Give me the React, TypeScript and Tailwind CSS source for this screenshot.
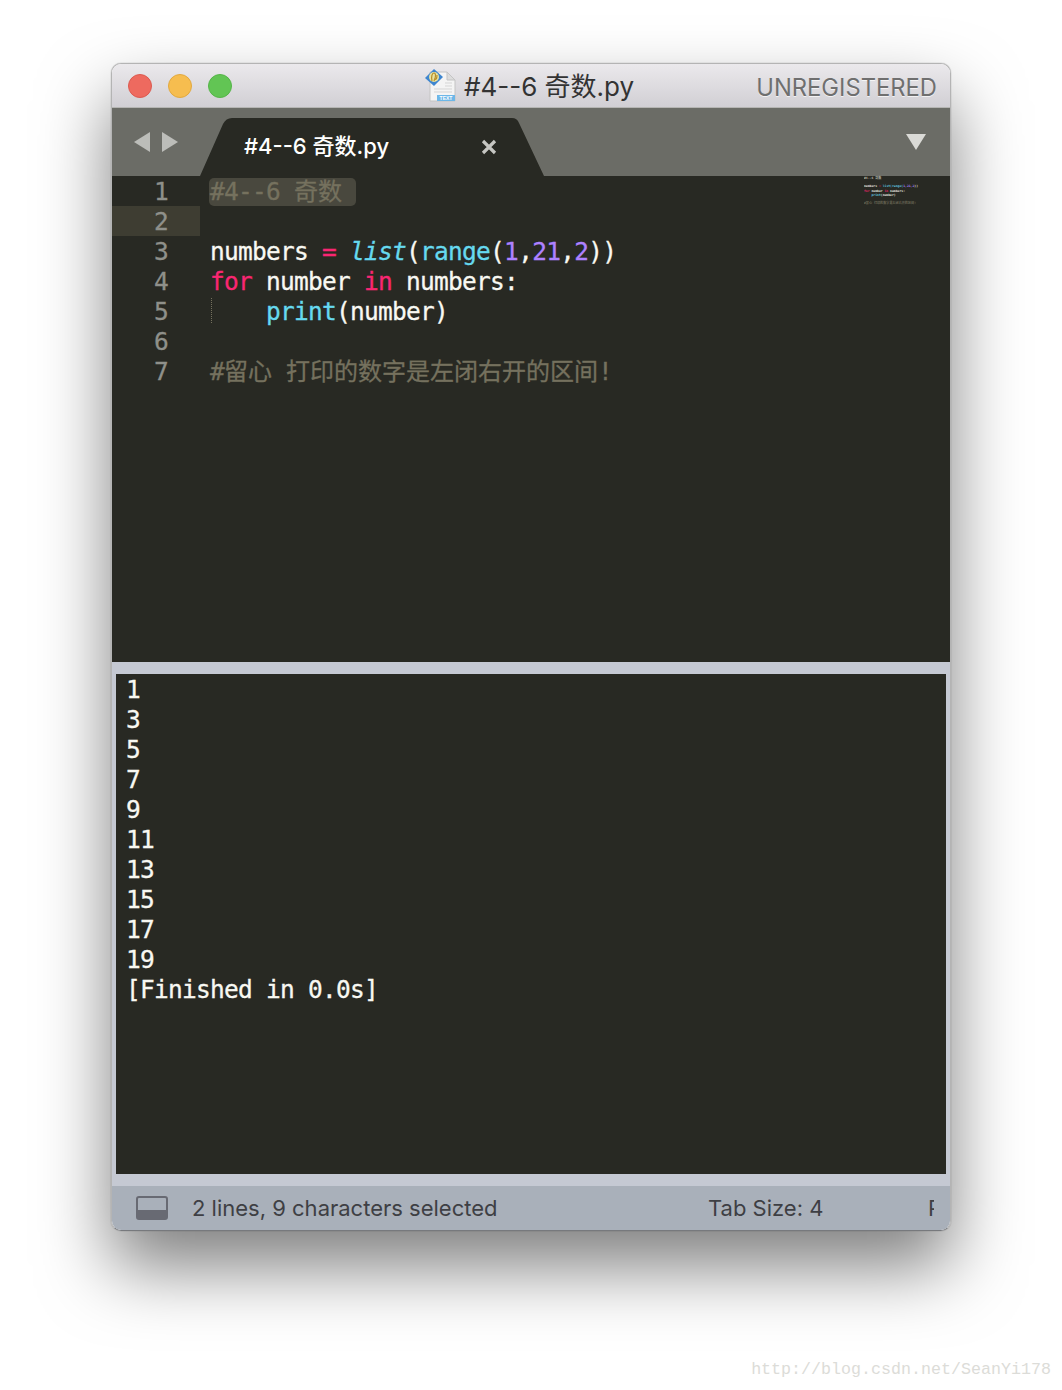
const mono = "font-['DejaVu_Sans_Mono','Noto_Sans_CJK_SC',monospace]";
const ui = "font-['Inter','Noto_Sans_CJK_SC',sans-serif]";
const codeText = 'text-[24.5px] tracking-[-0.75px] [-webkit-text-stroke:0.3px]';

const outputLines = ['1', '3', '5', '7', '9', '11', '13', '15', '17', '19', '[Finished in 0.0s]'];

function Cjk({ children }: { children: string }) {
  return <span className="text-[24px] tracking-normal leading-[24px] font-['Noto_Sans_CJK_SC',sans-serif]">{children}</span>;
}

function FileIcon() {
  return (
    <svg width="34" height="34" viewBox="0 0 34 34" className="shrink-0">
      <path d="M6 3h17l8 8v21H6z" fill="#f4f4f4" stroke="#c4c4c4" />
      <path d="M23 3v8h8z" fill="#dcdcdc" stroke="#c4c4c4" />
      <path d="M13 26h18v6H13z" fill="#6db7e8" />
      <path d="M10 0l9 8-9 9-9-8z" fill="#3f86cf" />
      <circle cx="10" cy="8" r="5" fill="#e8e2a0" />
      <path d="M8 12c-1-4 0-8 2-8s2 4 0 8m0-2c2 1 3 0 3-4" fill="none" stroke="#b98f2a" strokeWidth="1.2" />
      <path d="M21 14h7M21 17h7M10 20h18M10 23h18" stroke="#d5d5d5" strokeWidth="1" />
      <text x="22" y="31" textAnchor="middle" fontSize="5" fontWeight="700" fill="#fff" fontFamily="Liberation Sans">TEXT</text>
    </svg>
  );
}

function Minimap() {
  return (
    <div className={`absolute left-[752px] top-0 text-[3.1px] leading-[4.2px] tracking-normal [-webkit-text-stroke:0px] font-bold whitespace-pre opacity-90 ${mono}`}>
      <div className="text-[#c4c4b8]">#4--6 奇数</div>
      <div className="h-[4.2px]" />
      <div className="text-[#f8f8f2]">
        numbers <span className="text-[#f92672]">=</span> <span className="text-[#66d9ef]">list(range(</span>
        <span className="text-[#ae81ff]">1,21,2</span>))
      </div>
      <div className="text-[#f8f8f2]">
        <span className="text-[#f92672]">for</span> number <span className="text-[#f92672]">in</span> numbers:
      </div>
      <div className="text-[#f8f8f2]">
        {'    '}
        <span className="text-[#66d9ef]">print</span>(number)
      </div>
      <div className="h-[4.2px]" />
      <div className="text-[#75715e]">#留心 打印的数字是左闭右开的区间!</div>
    </div>
  );
}

export default function App() {
  return (
    <div className="w-[1062px] h-[1390px] bg-white pl-[111px] pt-[63px] flex flex-col overflow-hidden">
      <div className="w-[840px] h-[1168px] flex flex-col rounded-[10px] overflow-hidden shadow-[0_36px_70px_rgba(0,0,0,0.5),0_0_1px_rgba(0,0,0,0.5)] border border-[#b4b4b4] border-b-[#77797d]">
        {/* Title bar */}
        <div className={`h-[44px] shrink-0 flex items-center pl-[16px] pr-[13px] bg-gradient-to-b from-[#ebe9ec] to-[#d1cfd4] border-b border-[#b5b5b3] ${ui}`}>
          <div className="flex gap-[16px] w-[296px]">
            <span className="w-[24px] h-[24px] rounded-full bg-[#ee6a5f] border border-[#dc5a50]" />
            <span className="w-[24px] h-[24px] rounded-full bg-[#f6bd4f] border border-[#e2a93f]" />
            <span className="w-[24px] h-[24px] rounded-full bg-[#62c554] border border-[#55b548]" />
          </div>
          <FileIcon />
          <span className="ml-[6px] mt-[2px] text-[26px] text-[#333] whitespace-nowrap">#4--6 奇数.py</span>
          <span className="ml-auto mt-[5px] text-[23.75px] text-[#6f6f6f] whitespace-nowrap [text-shadow:0_1px_0_rgba(255,255,255,0.7)]">UNREGISTERED</span>
        </div>

        {/* Tab bar */}
        <div className={`h-[68px] shrink-0 bg-[#6b6c66] flex items-end ${ui}`}>
          <div className="w-[88px] h-full flex items-start gap-[12px] pl-[22px] pt-[24px]">
            <svg width="16" height="20" viewBox="0 0 16 20"><path d="M16 0v20L0 10z" fill="#bcbdb9" /></svg>
            <svg width="16" height="20" viewBox="0 0 16 20"><path d="M0 0v20l16-10z" fill="#bcbdb9" /></svg>
          </div>
          <div className="relative w-[344px] h-[58px]">
            <svg width="344" height="58" viewBox="0 0 344 58" className="absolute inset-0">
              <path d="M0 58L23 6Q26 0 32 0H312Q317 0 319 5L344 58z" fill="#282923" />
            </svg>
            <div className="relative h-full flex items-center pl-[44px] pb-[2px]">
              <span className="w-[236px] text-[22px] font-medium text-white whitespace-nowrap">#4--6 奇数.py</span>
              <svg width="16" height="16" viewBox="0 0 16 16" className="mt-[2px] ml-px">
                <path d="M2 2l12 12M14 2L2 14" stroke="#c6c6c2" strokeWidth="3.2" />
              </svg>
            </div>
          </div>
          <svg width="20" height="16" viewBox="0 0 20 16" className="self-start mt-[26px] ml-auto mr-[24px]">
            <path d="M0 0h20L10 16z" fill="#dadad6" />
          </svg>
        </div>

        {/* Editor */}
        <div className={`relative h-[486px] shrink-0 flex bg-[#282923] leading-[32px] ${codeText} ${mono}`}>
          <div className="w-[88px] shrink-0 text-right text-[#8f908a]">
            {[1, 2, 3, 4, 5, 6, 7].map((n) => (
              <div key={n} className={`h-[30px] pr-[32px] ${n === 2 ? 'bg-[#3e3d32]' : ''}`}>
                {n}
              </div>
            ))}
          </div>
          <div className="pl-[10px] text-[#f8f8f2] whitespace-pre">
            <div className="h-[30px] flex items-start">
              <span className="-ml-px pl-px h-[28px] mt-[2px] leading-[26px] rounded-[5px] bg-[#49483e] text-[#75715e]">
                #4--6<span className="opacity-40"> </span>
                <Cjk>奇数</Cjk>
                <span className="inline-block w-[14px]" />
              </span>
            </div>
            <div className="h-[30px]" />
            <div className="h-[30px]">
              numbers <span className="text-[#f92672]">=</span> <span className="italic text-[#66d9ef]">list</span>(
              <span className="text-[#66d9ef]">range</span>(<span className="text-[#ae81ff]">1</span>,
              <span className="text-[#ae81ff]">21</span>,<span className="text-[#ae81ff]">2</span>))
            </div>
            <div className="h-[30px]">
              <span className="text-[#f92672]">for</span> number <span className="text-[#f92672]">in</span> numbers:
            </div>
            <div className="relative h-[30px]">
              <span className="absolute left-px top-[2px] h-[25px] border-l border-dotted border-[#75715e]" />
              {'    '}
              <span className="text-[#66d9ef]">print</span>(number)
            </div>
            <div className="h-[30px]" />
            <div className="h-[30px] text-[#75715e]">
              #<Cjk>留心</Cjk> <Cjk>打印的数字是左闭右开的区间</Cjk>!
            </div>
          </div>
          <Minimap />
        </div>

        {/* Output panel */}
        <div className="flex-1 min-h-0 bg-[#c5c9d3] px-[4px] py-[12px]">
          <div className={`h-[500px] bg-[#282923] pl-[10px] pt-px leading-[30px] text-[#f8f8f2] ${codeText} ${mono}`}>
            {outputLines.map((line, i) => (
              <div key={i}>{line}</div>
            ))}
          </div>
        </div>

        {/* Status bar */}
        <div className={`h-[44px] shrink-0 flex items-center bg-[#a9b0ba] text-[22px] text-[#3e3f44] whitespace-nowrap ${ui}`}>
          <div className="ml-[24px] w-[32px] h-[24px] rounded-[3px] border-2 border-[#686a73] flex flex-col justify-end">
            <div className="h-[8px] bg-[#686a73]" />
          </div>
          <span className="ml-[24px] w-[516px]">2 lines, 9 characters selected</span>
          <span className="w-[220px]">Tab Size: 4</span>
          <span className="w-[6px] overflow-hidden">Python</span>
        </div>
      </div>

      <div className="w-[940px] mt-[129px] text-right font-['Liberation_Mono',monospace] text-[16.67px] leading-[20px] text-[#dcdcd8] whitespace-nowrap">
        http://blog.csdn.net/SeanYi178
      </div>
    </div>
  );
}
